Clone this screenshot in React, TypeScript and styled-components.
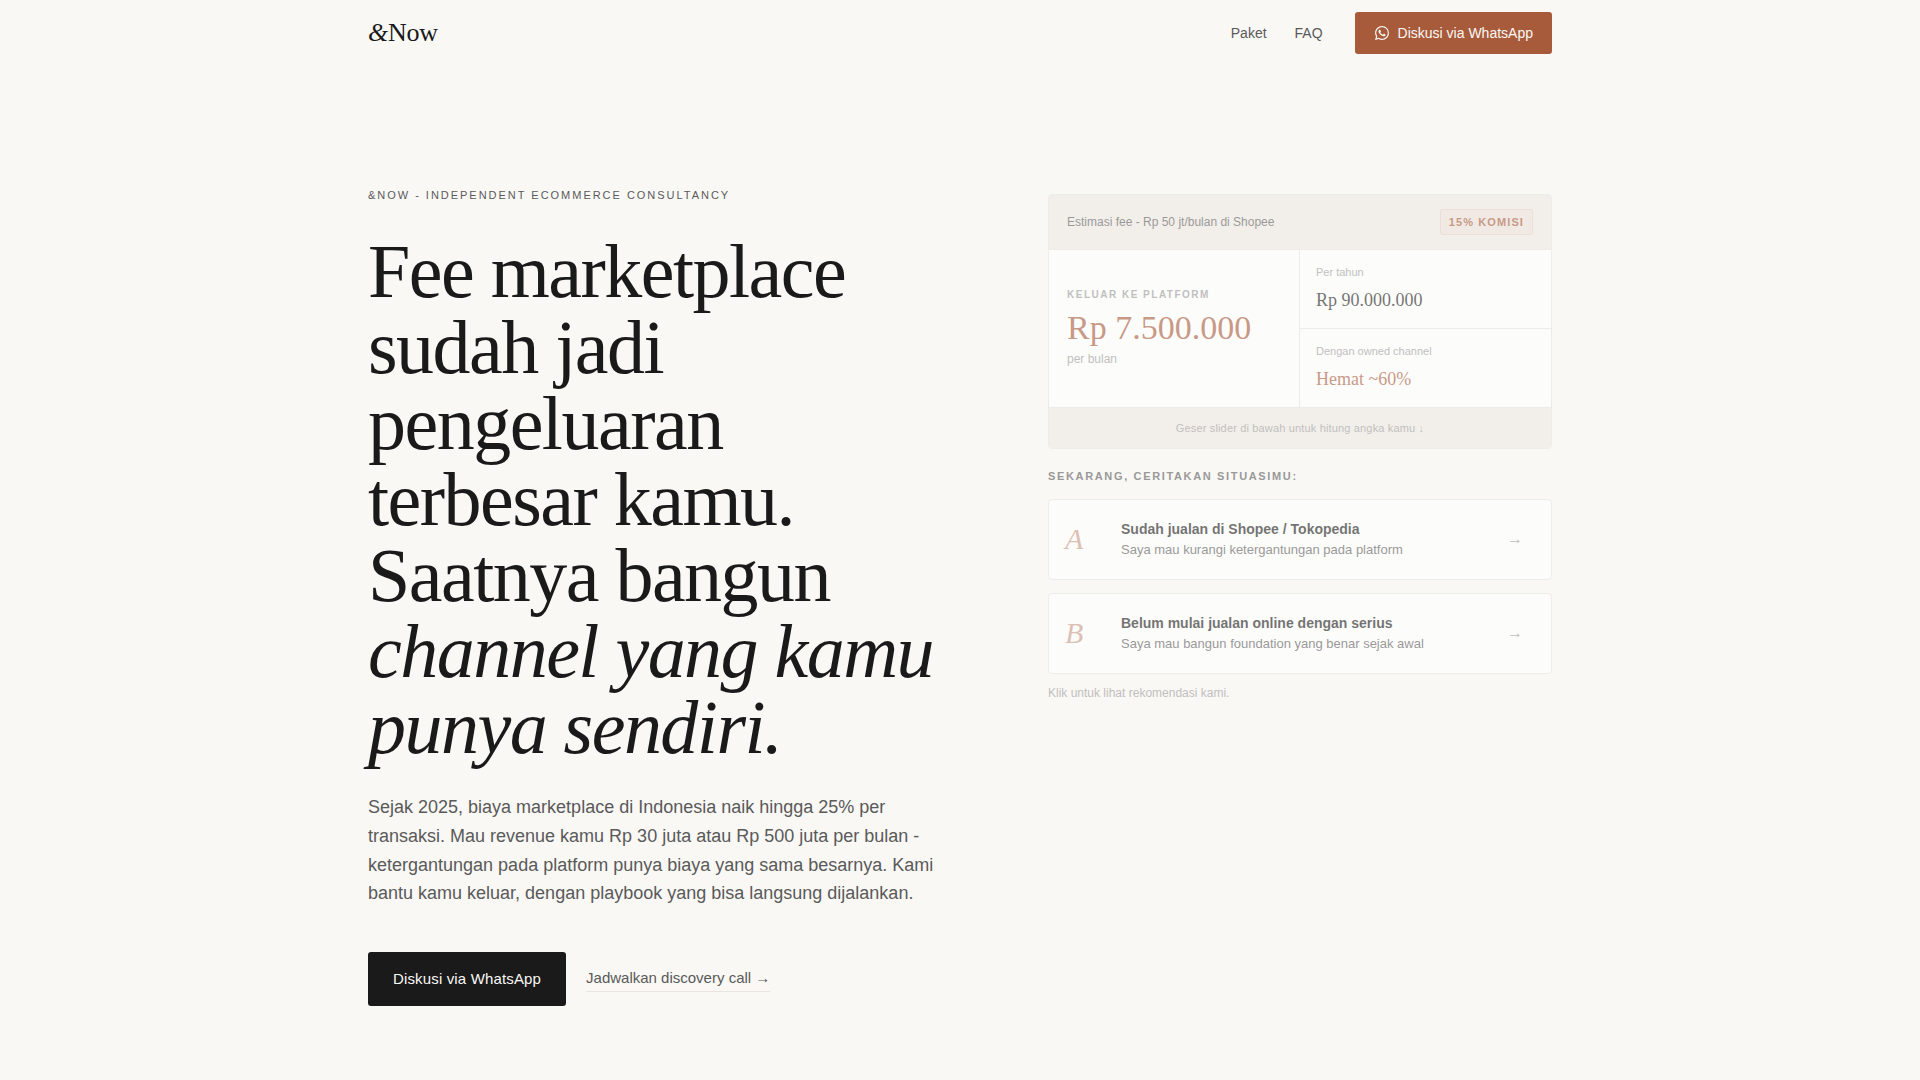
import React from "react";
import styled, { createGlobalStyle } from "styled-components";
import { SiWhatsapp } from "react-icons/si";

const sans = `"Liberation Sans", Arial, sans-serif`;
const serif = `"Liberation Serif", "Times New Roman", serif`;
const ink = "#1a1a1a";
const muted = "#5a5a5a";
const faint = "#9a9a9a";
const accent = "#a85b3b";
const line = "#e8e5df";
const paper = "#f9f8f5";
const sand = "#efe9e4";

const GlobalStyle = createGlobalStyle`
  *, *::before, *::after { box-sizing: border-box; }
  body { margin: 0; background: ${paper}; color: ${ink}; font-family: ${sans}; }
  h1, h2, p { margin: 0; font-weight: 400; }
  a { color: inherit; text-decoration: none; }
`;

const Container = styled.div`
  width: 100%;
  max-width: 1280px;
  margin: 0 auto;
  padding: 0 48px;
`;

const Bar = styled(Container)`
  display: flex;
  align-items: center;
  justify-content: space-between;
  padding-top: 12px;
  padding-bottom: 12px;
`;

const Logo = styled.a`
  font: 26px/32px ${serif};
  letter-spacing: -0.01em;
`;

const Nav = styled.nav`
  display: flex;
  align-items: center;
  gap: 28px;
  font-size: 14px;
  color: ${muted};
`;

const NavCta = styled.a`
  display: inline-flex;
  align-items: center;
  gap: 9px;
  height: 42px;
  margin-left: 4px;
  padding: 0 19px 0 20px;
  border-radius: 3px;
  background: ${accent};
  color: ${paper};
`;

const Hero = styled(Container)`
  display: grid;
  grid-template-columns: 11fr 9fr;
  gap: 64px;
  align-items: start;
  padding-top: 120px;
  padding-bottom: 72px;
`;

const Intro = styled.div`
  max-width: 584px;
`;

const Eyebrow = styled.p`
  padding-top: 1px;
  font-size: 11px;
  line-height: 16px;
  letter-spacing: 0.18em;
  text-transform: uppercase;
  color: ${muted};
`;

const Title = styled.h1`
  margin-top: 30px;
  font: 76px/76px ${serif};
  letter-spacing: -0.02em;
`;

const Lead = styled.p`
  margin-top: 28px;
  font-size: 18px;
  line-height: 1.6;
  color: ${muted};
`;

const Actions = styled.div`
  display: flex;
  align-items: center;
  gap: 20px;
  margin-top: 44px;
  font-size: 15px;
`;

const PrimaryLink = styled.a`
  display: inline-flex;
  align-items: center;
  height: 54px;
  padding: 0 25px 2px;
  border-radius: 3px;
  background: ${ink};
  color: ${paper};
  letter-spacing: 0.01em;
`;

const TextLink = styled.a`
  padding: 1px 0 3px;
  border-bottom: 1px solid ${line};
  line-height: 20px;
  color: ${muted};
`;

const Aside = styled.div`
  margin-top: 8px;
  opacity: 0.6;
`;

const Card = styled.section`
  overflow: hidden;
  border: 1px solid ${line};
  border-radius: 4px;
  background: #fff;
`;

const CardHead = styled.header`
  display: flex;
  align-items: center;
  justify-content: space-between;
  padding: 14px 18px;
  border-bottom: 1px solid ${line};
  background: ${sand};
  font-size: 12px;
  color: ${muted};
`;

const Badge = styled.span`
  padding: 0 8px;
  border: 1px solid #e6d0c6;
  border-radius: 2px;
  background: #ece0da;
  font-size: 11px;
  font-weight: 700;
  line-height: 24px;
  letter-spacing: 0.1em;
  color: ${accent};
`;

const Figures = styled.div`
  display: grid;
  grid-template-columns: 1fr 1fr;
`;

const MainFigure = styled.div`
  display: flex;
  flex-direction: column;
  justify-content: center;
  padding: 0 18px 4px;
  border-right: 1px solid ${line};
`;

const Caps = styled.p<{ $size: number; $color: string }>`
  font-size: ${(p) => p.$size}px;
  font-weight: 700;
  line-height: 16px;
  letter-spacing: 0.15em;
  text-transform: uppercase;
  color: ${(p) => p.$color};
`;

const BigNumber = styled.p`
  margin: 8px 0 6px;
  font: 34px/34px ${serif};
  color: ${accent};
`;

const Small = styled.p<{ $size: number }>`
  font-size: ${(p) => p.$size}px;
  line-height: 16px;
  color: ${faint};
`;

const SideFigure = styled.div`
  padding: 14px 16px 17px;

  & + & {
    border-top: 1px solid ${line};
  }
`;

const SideNumber = styled.p<{ $accent?: boolean }>`
  margin-top: 9px;
  font: 18px/22px ${serif};
  color: ${(p) => (p.$accent ? accent : ink)};
`;

const CardFoot = styled.footer`
  padding: 12px 18px;
  border-top: 1px solid ${line};
  background: ${sand};
  text-align: center;
  letter-spacing: 0.01em;
`;

const Choices = styled.div`
  display: grid;
  gap: 13px;
  margin: 19px 0 11px;

  ${Caps} {
    margin-bottom: 2px;
  }
`;

const Choice = styled.button`
  display: grid;
  grid-template-columns: 40px 1fr auto;
  align-items: center;
  gap: 16px;
  width: 100%;
  padding: 18px 28px 19px 16px;
  border: 1px solid ${line};
  border-radius: 4px;
  background: #fff;
  font-family: ${sans};
  text-align: left;
  cursor: pointer;
`;

const Letter = styled.span`
  font: italic 30px/30px ${serif};
  color: ${accent};
  opacity: 0.6;
`;

const ChoiceTitle = styled.span`
  display: block;
  font-size: 14px;
  font-weight: 700;
  line-height: 22px;
  color: ${ink};
`;

const ChoiceText = styled.span`
  display: block;
  font-size: 13px;
  line-height: 20px;
  color: ${muted};
`;

const Arrow = styled.span`
  font-size: 16px;
  color: ${faint};
`;

const choices = [
  { letter: "A", title: "Sudah jualan di Shopee / Tokopedia", text: "Saya mau kurangi ketergantungan pada platform" },
  { letter: "B", title: "Belum mulai jualan online dengan serius", text: "Saya mau bangun foundation yang benar sejak awal" },
];

export default function App() {
  return (
    <>
      <GlobalStyle />
      <header>
        <Bar>
          <Logo href="#"><em>&amp;</em>Now</Logo>
          <Nav>
            <a href="#paket">Paket</a>
            <a href="#faq">FAQ</a>
            <NavCta href="#whatsapp">
              <SiWhatsapp size={14} aria-hidden="true" />
              Diskusi via WhatsApp
            </NavCta>
          </Nav>
        </Bar>
      </header>
      <main>
        <Hero>
          <Intro>
            <Eyebrow>&amp;Now - Independent Ecommerce Consultancy</Eyebrow>
            <Title>
              Fee marketplace sudah jadi pengeluaran terbesar kamu. Saatnya bangun{" "}
              <em>channel yang kamu punya sendiri.</em>
            </Title>
            <Lead>
              Sejak 2025, biaya marketplace di Indonesia naik hingga 25% per transaksi. Mau revenue kamu Rp 30 juta
              atau Rp 500 juta per bulan - ketergantungan pada platform punya biaya yang sama besarnya. Kami bantu
              kamu keluar, dengan playbook yang bisa langsung dijalankan.
            </Lead>
            <Actions>
              <PrimaryLink href="#whatsapp">Diskusi via WhatsApp</PrimaryLink>
              <TextLink href="#call">Jadwalkan discovery call →</TextLink>
            </Actions>
          </Intro>
          <Aside>
            <Card>
              <CardHead>
                <span>Estimasi fee - Rp 50 jt/bulan di Shopee</span>
                <Badge>15% KOMISI</Badge>
              </CardHead>
              <Figures>
                <MainFigure>
                  <Caps $size={10} $color={faint}>Keluar ke platform</Caps>
                  <BigNumber>Rp 7.500.000</BigNumber>
                  <Small $size={12}>per bulan</Small>
                </MainFigure>
                <div>
                  <SideFigure>
                    <Small $size={11}>Per tahun</Small>
                    <SideNumber>Rp 90.000.000</SideNumber>
                  </SideFigure>
                  <SideFigure>
                    <Small $size={11}>Dengan owned channel</Small>
                    <SideNumber $accent>Hemat ~60%</SideNumber>
                  </SideFigure>
                </div>
              </Figures>
              <CardFoot>
                <Small $size={11}>Geser slider di bawah untuk hitung angka kamu ↓</Small>
              </CardFoot>
            </Card>
            <Choices>
              <Caps $size={11} $color={muted}>Sekarang, ceritakan situasimu:</Caps>
              {choices.map((c) => (
                <Choice key={c.letter} type="button">
                  <Letter>{c.letter}</Letter>
                  <span>
                    <ChoiceTitle>{c.title}</ChoiceTitle>
                    <ChoiceText>{c.text}</ChoiceText>
                  </span>
                  <Arrow>→</Arrow>
                </Choice>
              ))}
            </Choices>
            <Small $size={12}>Klik untuk lihat rekomendasi kami.</Small>
          </Aside>
        </Hero>
      </main>
    </>
  );
}
